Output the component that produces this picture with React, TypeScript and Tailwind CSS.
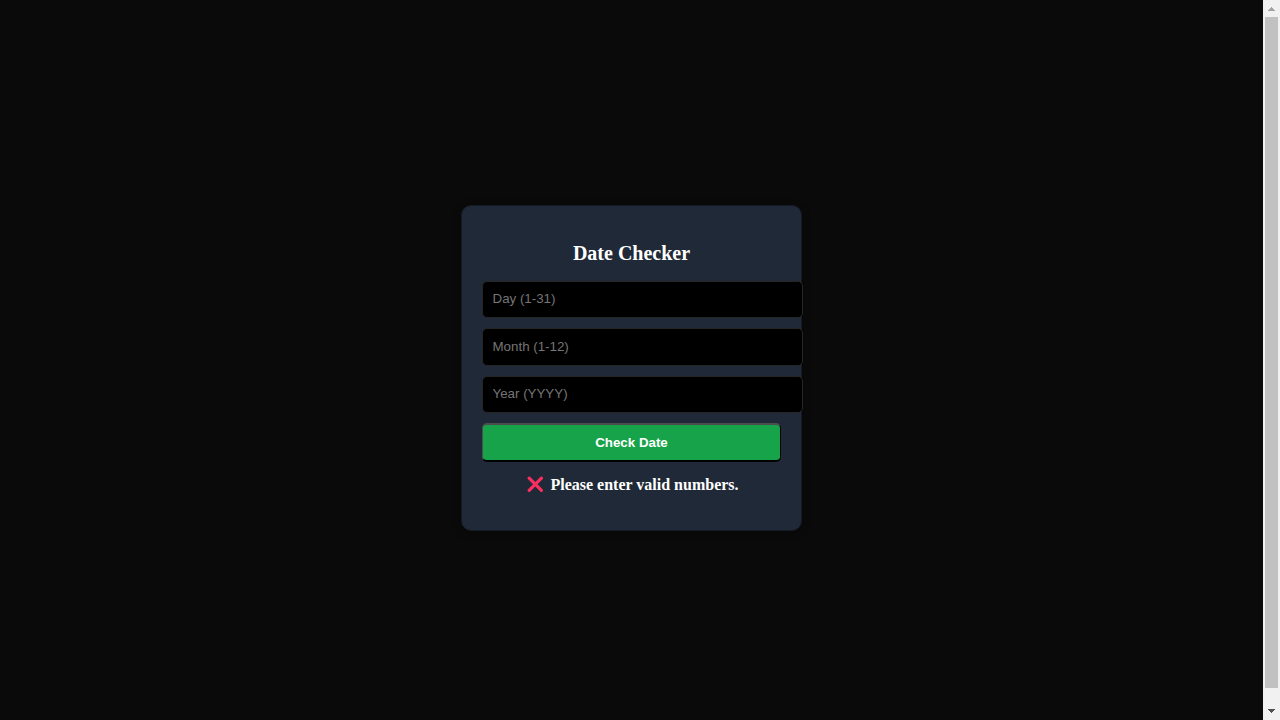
const FIELDS = ["Day (1-31)", "Month (1-12)", "Year (YYYY)"];

function Scrollbar() {
  return (
    <div className="flex w-[17px] shrink-0 flex-col items-center bg-[#f1f1f1]">
      <svg className="h-[17px] w-[17px] shrink-0" viewBox="0 0 17 17" shapeRendering="crispEdges">
        <path d="M8 7h1v1h1v1h1v1h1v1H5v-1h1V9h1V8h1z" fill="#a3a3a3" />
      </svg>
      <div className="h-[671px] w-[13px] bg-[#c1c1c1]" />
      <div className="flex-1" />
      <svg className="h-[17px] w-[17px] shrink-0" viewBox="0 0 17 17" shapeRendering="crispEdges">
        <path d="M5 6h7v1h-1v1h-1v1H9v1H8V9H7V8H6V7H5z" fill="#505050" />
      </svg>
    </div>
  );
}

export default function App() {
  return (
    <div className="flex h-screen overflow-hidden bg-[#0a0a0a] text-white">
      <main className="flex h-[736px] flex-1 items-center justify-center font-['Liberation_Serif',serif]">
        <div className="h-[326px] w-[341px] rounded-[10px] border border-[#151b23] bg-[#1f2937] p-[20px] text-center shadow-[0_2px_8px_rgba(0,0,0,0.3)]">
          <h2 className="mt-[15px] mb-[15.5px] text-[20px] leading-[24px] font-bold">Date Checker</h2>
          {FIELDS.map((label) => (
            <input
              key={label}
              placeholder={label}
              className="mb-[10px] block h-[37.5px] w-[321px] rounded-[5px] border border-[#262626] bg-black px-[9.5px] pt-[9.5px] pb-[10.5px] font-['Liberation_Sans',sans-serif] text-[13.333px] leading-[15.5px] placeholder:text-[#757575]"
            />
          ))}
          <button className="block h-[39px] w-full rounded-[5px] border-x border-y-2 border-t-[#4d4d4d] border-r-black border-b-black border-l-[#4d4d4d] bg-[#16a34a] font-['Liberation_Sans',sans-serif] text-[13.333px] leading-[15px] font-bold">
            Check Date
          </button>
          <p className="mt-[14px] flex items-center justify-center gap-[6px] pl-px text-[16px] leading-[18px] font-bold">
            <svg className="h-[18px] w-[19px]" viewBox="0 0 19 18">
              <path d="M4.2 2.2l12.2 12.2M16.4 2.2l-12.2 12.2" stroke="#f92f60" strokeWidth="3.2" strokeLinecap="round" />
            </svg>
            Please enter valid numbers.
          </p>
        </div>
      </main>
      <Scrollbar />
    </div>
  );
}
